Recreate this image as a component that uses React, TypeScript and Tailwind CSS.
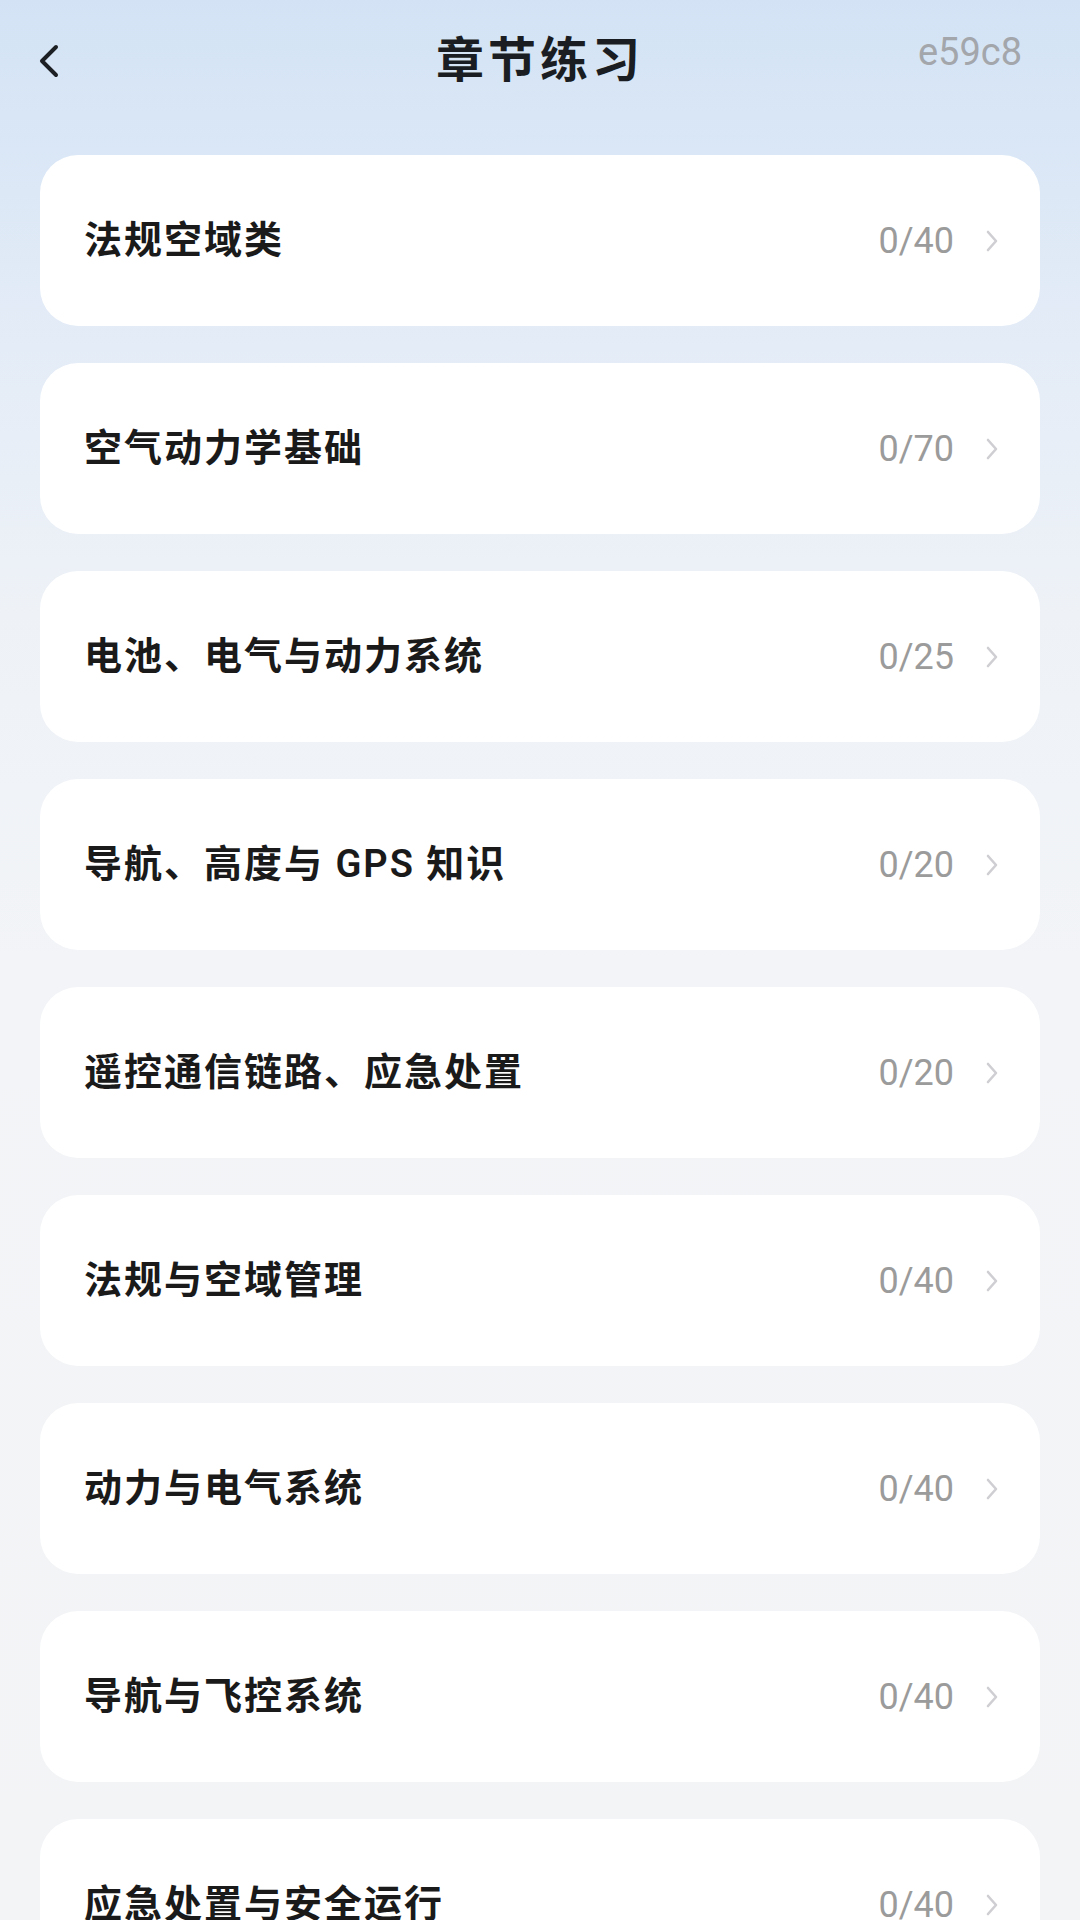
import React from "react";

type Chapter = {
  id: number;
  title: string;
  done: number;
  total: number;
};

const chapters: Chapter[] = [
  { id: 1, title: "法规空域类", done: 0, total: 40 },
  { id: 2, title: "空气动力学基础", done: 0, total: 70 },
  { id: 3, title: "电池、电气与动力系统", done: 0, total: 25 },
  { id: 4, title: "导航、高度与 GPS 知识", done: 0, total: 20 },
  { id: 5, title: "遥控通信链路、应急处置", done: 0, total: 20 },
  { id: 6, title: "法规与空域管理", done: 0, total: 40 },
  { id: 7, title: "动力与电气系统", done: 0, total: 40 },
  { id: 8, title: "导航与飞控系统", done: 0, total: 40 },
  { id: 9, title: "应急处置与安全运行", done: 0, total: 40 },
];

const FONT = "font-['Roboto','Noto_Sans_CJK_SC',sans-serif]";

function BackIcon() {
  return (
    <svg width="24" height="34" viewBox="0 0 24 34" fill="none">
      <path
        d="M19 3 L5 17 L19 31"
        stroke="#1c1f24"
        strokeWidth="4"
        strokeLinecap="round"
        strokeLinejoin="round"
      />
    </svg>
  );
}

function ChevronRight() {
  return (
    <svg width="16" height="26" viewBox="0 0 16 26" fill="none">
      <path
        d="M4 4 L12 13 L4 22"
        stroke="#cfcfd3"
        strokeWidth="2.6"
        strokeLinecap="round"
        strokeLinejoin="round"
      />
    </svg>
  );
}

function ChapterRow({ chapter }: { chapter: Chapter }) {
  return (
    <div className="flex h-[171px] shrink-0 items-center justify-between rounded-[38px] bg-white pl-[44px] pr-[40px]">
      <span className="text-[38px] font-semibold tracking-[2px] text-[#1a1a1a]">
        {chapter.title}
      </span>
      <div className="flex items-center gap-[30px]">
        <span className="text-[36px] text-[#9b9b9b]">
          {chapter.done}/{chapter.total}
        </span>
        <ChevronRight />
      </div>
    </div>
  );
}

export default function App() {
  return (
    <div
      className={`${FONT} h-[1920px] w-[1080px] overflow-hidden bg-[linear-gradient(180deg,#d3e3f5_0%,#e4ecf7_18%,#eef2f7_32%,#f2f4f7_50%,#f3f4f6_100%)]`}
    >
      {/* шапка */}
      <div className="grid h-[122px] grid-cols-[1fr_auto_1fr] items-center">
        <div className="flex items-center pl-[37px]">
          <BackIcon />
        </div>
        <h1 className="text-[48px] font-bold tracking-[4px] text-[#1a1d22]">
          章节练习
        </h1>
        <div className="flex justify-end self-start pr-[58px] pt-[24px]">
          <span className="text-[38px] text-[#a3a6ab]">e59c8</span>
        </div>
      </div>

      {/* список глав */}
      <div className="flex flex-col gap-[37px] px-[40px] pt-[33px]">
        {chapters.map((c) => (
          <ChapterRow key={c.id} chapter={c} />
        ))}
      </div>
    </div>
  );
}
